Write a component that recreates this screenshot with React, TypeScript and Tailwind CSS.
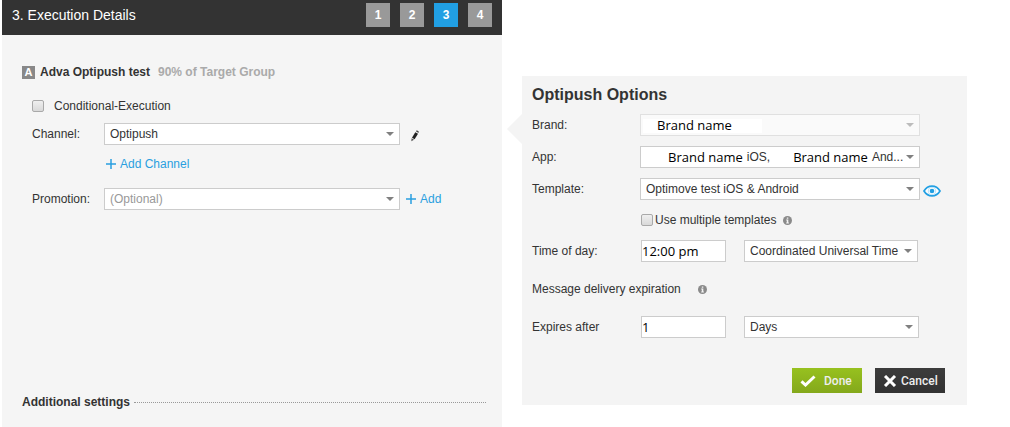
import type { ReactNode, SelectHTMLAttributes } from 'react';

function Caret({ faded = false }: { faded?: boolean }) {
  return (
    <svg
      viewBox="0 0 8 4"
      aria-hidden="true"
      className={`pointer-events-none absolute top-[9px] right-[6px] h-1 w-2 ${faded ? 'fill-[#bcbcbc]' : 'fill-[#808080]'}`}
    >
      <path d="M0 0h8L4 4z" />
    </svg>
  );
}

type DropdownProps = SelectHTMLAttributes<HTMLSelectElement> & {
  wrapper: string;
  look?: string;
};

function Dropdown({ wrapper, look = 'border-[#cccccc] bg-white pl-[5px] text-[#333]', children, ...rest }: DropdownProps) {
  return (
    <div className={`relative ${wrapper}`}>
      <select
        {...rest}
        className={`block h-[22px] w-full appearance-none border pr-4 text-[12px] leading-[20px] opacity-100 outline-none ${look}`}
      >
        {children}
      </select>
      <Caret faded={rest.disabled} />
    </div>
  );
}

function Plus() {
  return (
    <svg viewBox="0 0 10 10" aria-hidden="true" className="size-[10px] fill-none stroke-[#2a9fdf] stroke-[1.5]">
      <path d="M5 0v10M0 5h10" />
    </svg>
  );
}

function Info({ label }: { label: string }) {
  return (
    <svg viewBox="0 0 9 9" role="img" aria-label={label} className="size-[9px] shrink-0">
      <circle cx="4.5" cy="4.5" r="4.5" fill="#8a8a8a" />
      <path d="M3.8 1.4h1.5v1.3H3.8zM3.2 3.5h2.1v3h.6v.9H3.2v-.9h.6V4.4h-.6z" fill="#f4f4f4" />
    </svg>
  );
}

function Check({ id }: { id: string }) {
  return (
    <input
      id={id}
      type="checkbox"
      className="size-3 shrink-0 appearance-none rounded-[2px] border border-[#a9a9a9] bg-linear-to-b from-[#efefef] to-[#d9d9d9] checked:bg-[#2a9fdf]"
    />
  );
}

function OptionRow({ id, label, children }: { id: string; label: string; children: ReactNode }) {
  return (
    <div className="flex h-[22px] items-center">
      <label htmlFor={id} className="w-[108px] shrink-0">
        {label}
      </label>
      {children}
    </div>
  );
}

const steps = [1, 2, 3, 4];

function ExecutionDetails() {
  return (
    <section className="flex min-h-screen flex-col bg-[#f5f5f5]">
      <header className="flex h-[35px] items-center justify-between bg-[#333] px-[10px] pb-[5px] text-white">
        <h1 className="text-[14px] leading-4">3. Execution Details</h1>
        <nav aria-label="Steps" className="flex gap-[10px]">
          {steps.map((step) => (
            <button
              key={step}
              type="button"
              aria-current={step === 3 ? 'step' : undefined}
              className={`size-6 text-[12px] font-bold ${step === 3 ? 'bg-[#219fe3]' : 'bg-[#999]'}`}
            >
              {step}
            </button>
          ))}
        </nav>
      </header>

      <div className="flex grow flex-col px-[20px] pt-[29px]">
        <h2 className="flex items-center text-[12px] leading-4 font-bold">
          <span className="mr-[5px] grid size-[13px] place-items-center bg-[#888] text-[11px] leading-3 text-white">A</span>
          Adva Optipush test
          <span className="ml-2 text-[#aaa]">90% of Target Group</span>
        </h2>

        <div className="mt-[18px] flex h-4 items-center gap-[10px] pl-[10px]">
          <Check id="conditional" />
          <label htmlFor="conditional">Conditional-Execution</label>
        </div>

        <div className="mt-[9px] flex h-[22px] items-center pl-[10px]">
          <label htmlFor="channel" className="w-[72px] shrink-0">
            Channel:
          </label>
          <Dropdown id="channel" wrapper="flex-1">
            <option>Optipush</option>
          </Dropdown>
          <div className="flex w-[82px] shrink-0 pl-[10px]">
            <button type="button" aria-label="Edit channel">
              <svg viewBox="0 0 10 12" className="mt-1 h-3 w-[10px]">
                <path d="M5.300 2.200 8 3.800 4.600 9.300 2 7.700z" fill="#222" />
                <path d="M5.900 1.300 6.800.2 8.800 1.400 8.500 3z" fill="#444" />
                <path d="M1.600 8.300 4 9.800 1.300 11.200z" fill="#555" />
              </svg>
            </button>
          </div>
        </div>

        <a href="#add-channel" className="mt-[11px] ml-[84px] flex h-4 items-center gap-1 self-start text-[#2a9fdf]">
          <Plus />
          Add Channel
        </a>

        <div className="mt-4 flex h-[22px] items-center pl-[10px]">
          <label htmlFor="promotion" className="w-[72px] shrink-0">
            Promotion:
          </label>
          <Dropdown id="promotion" wrapper="flex-1" look="border-[#cccccc] bg-white pl-[5px] text-[#999]">
            <option>(Optional)</option>
          </Dropdown>
          <div className="w-[82px] shrink-0 pl-[6px]">
            <a href="#add-promotion" className="inline-flex items-center gap-1 text-[#2a9fdf]">
              <Plus />
              Add
            </a>
          </div>
        </div>

        <div className="mt-auto mr-[-4px] mb-[17px] flex items-center gap-1 text-[12px] leading-4 font-bold">
          <h2>Additional settings</h2>
          <span className="flex-1 border-t border-dotted border-[#999]" />
        </div>
      </div>
    </section>
  );
}

function OptipushOptions() {
  return (
    <section className="relative mt-[76px] self-start bg-[#f4f4f4] pr-[22px] pb-3 pl-[10px]">
      <svg viewBox="0 0 15 30" aria-hidden="true" className="absolute top-[38px] -left-[15px] h-[30px] w-[15px] fill-[#f4f4f4]">
        <path d="M15 0v30L0 15z" />
      </svg>

      <h2 className="pt-[9px] text-[16px] leading-5 font-bold">Optipush Options</h2>

      <div className="mt-[9px] flex flex-col gap-[10px]">
        <OptionRow id="brand" label="Brand:">
          <Dropdown
            id="brand"
            disabled
            wrapper="mr-[25px] flex-1"
            look="border-[#e0e0e0] bg-[#fafafa] bg-linear-to-b from-white to-white bg-size-[119px_14px] bg-position-[2px_4px] bg-no-repeat pl-4 font-['Open_Sans',sans-serif] text-[13px] text-black"
          >
            <option>Brand name</option>
          </Dropdown>
        </OptionRow>
        <OptionRow id="app" label="App:">
          <div className="relative mr-[25px] flex-1">
            <button
              id="app"
              type="button"
              aria-haspopup="listbox"
              className="flex h-[22px] w-full items-center overflow-hidden border border-[#cccccc] bg-white pl-[27px] whitespace-nowrap"
            >
              <span className="font-['Open_Sans',sans-serif] text-[13px] leading-5 text-black">Brand name</span>
              <span className="ml-1">iOS,</span>
              <span className="ml-[23px] font-['Open_Sans',sans-serif] text-[13px] leading-5 text-black">Brand name</span>
              <span className="ml-1">And...</span>
            </button>
            <Caret />
          </div>
        </OptionRow>
        <OptionRow id="template" label="Template:">
          <Dropdown id="template" wrapper="flex-1">
            <option>Optimove test iOS &amp; Android</option>
          </Dropdown>
          <button type="button" aria-label="Preview template" className="mt-1 ml-[3px] w-[22px] shrink-0">
            <svg viewBox="0 0 18 12" className="h-3 w-[18px]">
              <path d="M1 6C3 2.700 5.700 1.100 9 1.100S15 2.700 17 6c-2 3.300-4.700 4.900-8 4.900S3 9.300 1 6z" fill="#fff" stroke="#219fe3" strokeWidth="1.700" />
              <circle cx="9" cy="6" r="3.800" fill="#fff" stroke="#8fcff1" strokeWidth=".6" />
              <circle cx="9" cy="6" r="2.300" fill="#219fe3" />
            </svg>
          </button>
        </OptionRow>
      </div>

      <div className="mt-3 ml-[109px] flex h-4 items-center">
        <Check id="multiple" />
        <label htmlFor="multiple" className="mr-[7px] ml-[2px]">
          Use multiple templates
        </label>
        <Info label="About multiple templates" />
      </div>

      <div className="mt-3">
        <OptionRow id="time" label="Time of day:">
          <input
            id="time"
            type="text"
            defaultValue="12:00 pm"
            className="ml-px h-[22px] w-[85px] border border-[#cccccc] bg-white font-['Open_Sans',sans-serif] text-[13px] text-black outline-none"
          />
          <Dropdown aria-label="Time zone" wrapper="mr-[27px] ml-[18px] flex-1">
            <option>Coordinated Universal Time</option>
          </Dropdown>
        </OptionRow>
      </div>

      <div className="mt-[19px] flex h-4 items-center gap-[17px]">
        <h3>Message delivery expiration</h3>
        <Info label="About message delivery expiration" />
      </div>

      <div className="mt-[19px]">
        <OptionRow id="expires" label="Expires after">
          <input
            id="expires"
            type="text"
            defaultValue="1"
            className="ml-px h-[22px] w-[85px] border border-[#cccccc] bg-white font-['Open_Sans',sans-serif] text-[13px] text-black outline-none"
          />
          <Dropdown aria-label="Expiration unit" wrapper="mr-[26px] ml-[18px] flex-1">
            <option>Days</option>
          </Dropdown>
        </OptionRow>
      </div>

      <div className="mt-[30px] flex justify-end gap-[13px] font-['Roboto',sans-serif] text-[12px] font-medium text-[#eee]">
        <button type="button" className="flex h-[25px] w-[70px] items-center gap-2 bg-linear-to-b from-[#97c11f] to-[#84a81b] pl-2">
          <svg viewBox="0 0 16 12" aria-hidden="true" className="h-3 w-4 fill-none stroke-white stroke-[3]">
            <path d="M1.500 6.300 5.500 10 14.500 1.500" />
          </svg>
          Done
        </button>
        <button type="button" className="flex h-[25px] w-[70px] items-center gap-1 bg-linear-to-b from-[#3c3c3c] to-[#323232] pl-2">
          <svg viewBox="0 0 14 12" aria-hidden="true" className="h-3 w-[14px] fill-none stroke-white stroke-[3]">
            <path d="M2 1 12 11M12 1 2 11" />
          </svg>
          Cancel
        </button>
      </div>
    </section>
  );
}

export default function App() {
  return (
    <main className="grid min-h-screen grid-cols-[500fr_445fr] gap-5 bg-white pr-[43px] pl-[2px] font-['Liberation_Sans',Arial,sans-serif] text-[12px] leading-4 text-[#333]">
      <ExecutionDetails />
      <OptipushOptions />
    </main>
  );
}
